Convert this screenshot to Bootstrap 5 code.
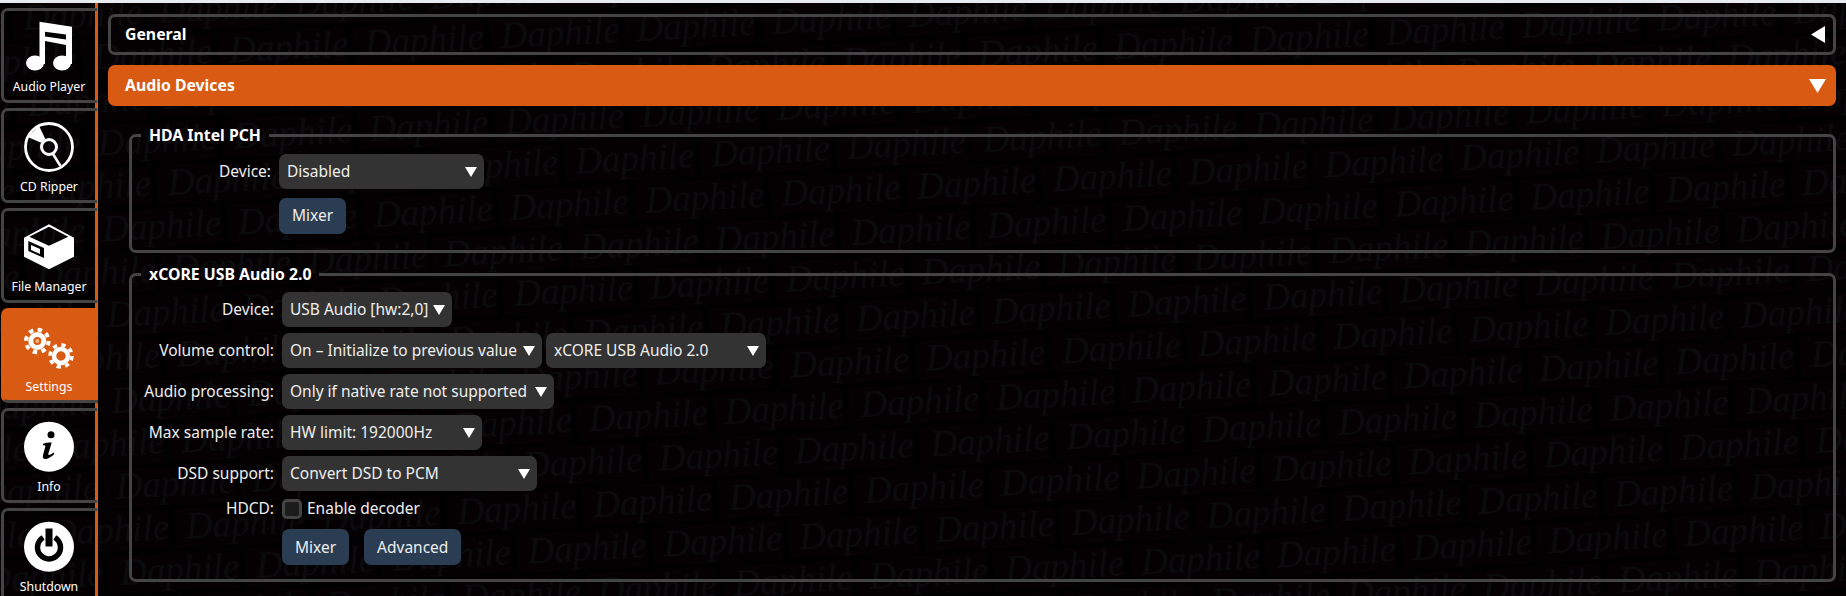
<!DOCTYPE html>
<html lang="en">
<head>
<meta charset="UTF-8">
<title>Daphile</title>
<link href="https://cdn.jsdelivr.net/npm/bootstrap@5.3.0/dist/css/bootstrap.min.css" rel="stylesheet">
<style>
  html, body { height: 100%; }
  body {
    background: #000; color: #eee; overflow: hidden;
    font-family: "Noto Sans", "Liberation Sans", sans-serif; font-size: 15.5px;
    border-top: 3px solid #e8ebef; position: relative;
  }
  .wm { position: absolute; inset: 0; width: 100%; height: 100%; z-index: 0; }
  .shell { position: relative; z-index: 1; height: 593px; }

  /* left menu */
  .side { width: 98px; flex: none; border-right: 3px solid #d85a13; padding: 5px 0 0 1px; }
  .side-item {
    width: 96px; height: 95px; margin-bottom: 5px; color: #fff; position: relative;
    border: 3px solid #444; border-right: 0; border-radius: 7px 0 0 7px;
    font-size: 12.3px; line-height: 14px; padding: 9px 3px 0 0;
  }
  .side-item svg { width: 52px; height: 52px; display: block; margin: 0 auto 8px; }
  .side-item.on { background: #d85a13; border-color: #d85a13; border-bottom-color: #444; width: 97px; padding-right: 4px; }

  /* main */
  .main { padding: 11px 10px 0 10px; width: 1748px; }
  .bar {
    height: 41px; border: 3px solid #444; border-radius: 7px; margin-bottom: 10px;
    padding: 0 8px 0 14px; font-weight: 700; font-size: 15.8px; color: #fff;
  }
  .bar.on { background: #d85a13; border-color: #d85a13; margin-bottom: 18px; padding-right: 7px; }
  .tri-l { width: 14px; height: 17px; }
  .tri-d { width: 17px; height: 14px; }
  .fset { border: 3px solid #444; border-radius: 7px; margin: 0 0 10px 21px; padding: 0; min-width: 0; }
  .fset-a { height: 129px; }
  .fset-b { height: 319px; }
  .fset-title {
    float: none; width: auto; margin: 0 0 0 9px; padding: 0 8px;
    font-weight: 700; font-size: 15.8px; line-height: 22px; color: #fff;
  }
  .rows-a { padding-top: 8px; }
  .rows-b { padding-top: 7px; }
  .frow { display: flex; align-items: center; margin-bottom: 6px; }
  .frow-btn { margin-top: 9px; }
  .btn-gap { gap: 15px; }
  .flabel { text-align: right; padding-right: 8px; color: #eee; flex: none; margin: 0; }
  .rows-a .flabel { width: 147px; }
  .rows-b .flabel { width: 150px; }
  .pick {
    height: 35px; border: 0; border-radius: 7px; color: #eee; font-size: 15.5px;
    background-color: #333; padding: 0 20px 0 8px; box-shadow: none;
    background-image: url("data:image/svg+xml,%3Csvg xmlns='http://www.w3.org/2000/svg' width='12' height='10'%3E%3Cpath d='M0 0h12L6 10z' fill='%23fff'/%3E%3C/svg%3E");
    background-repeat: no-repeat; background-size: 12px 10px; background-position: right 7px center;
    flex: none;
  }
  .w205 { width: 205px; }
  .w170 { width: 170px; }
  .w260 { width: 260px; margin-right: 4px; }
  .w220 { width: 220px; }
  .w272 { width: 272px; }
  .w200 { width: 200px; }
  .w255 { width: 255px; }
  .mix {
    height: 36px; background: #2b3d52; color: #eee; border: 0; border-radius: 7px;
    font-size: 15.5px; padding: 0 13px;
  }
  .mix:hover { background: #2b3d52; color: #eee; }
  .tick {
    width: 20px; height: 20px; margin: 0 5px 0 0; background-color: #1c1c1c;
    border: 3px solid #444; border-radius: 5px; appearance: none; flex: none;
  }
</style>
</head>
<body>

<!-- watermark tiles -->
<svg class="wm" aria-hidden="true">
  <defs>
    <pattern id="tile" width="136" height="86" patternUnits="userSpaceOnUse" patternTransform="translate(10 -4) rotate(-3)">
      <rect x="1" y="2" width="130" height="39" fill="#050103"/>
      <rect x="69" y="45" width="130" height="39" fill="#050103"/>
      <rect x="-67" y="45" width="130" height="39" fill="#050103"/>
      <g font-family="Liberation Serif" font-style="italic" font-size="37" fill="#0b0b0d">
        <text x="12" y="32">Daphile</text>
        <text x="80" y="75">Daphile</text>
        <text x="-56" y="75">Daphile</text>
      </g>
    </pattern>
  </defs>
  <rect width="100%" height="100%" fill="url(#tile)"/>
</svg>

<div class="shell d-flex">
  <nav class="side">
    <div class="side-item text-center">
      <svg viewBox="0 0 52 52"><path fill="#fff" fill-rule="evenodd" d="M16.500 1.700 49 6.700V44h-6V25L22 21v23h-5.500zM22 11.700v4.800l21 3v-5z"/><ellipse cx="12" cy="43" rx="9" ry="7.500" fill="#fff"/><ellipse cx="39" cy="43" rx="9" ry="7.500" fill="#fff"/></svg>
      Audio Player
    </div>
    <div class="side-item text-center">
      <svg viewBox="0 0 52 52"><circle cx="26" cy="27" r="23.500" fill="none" stroke="#fff" stroke-width="2.800"/><circle cx="26" cy="27" r="7.500" fill="none" stroke="#fff" stroke-width="3"/><path fill="#fff" d="M4.700 17 16 5.700l6.200 13-4 4z"/><path fill="none" stroke="#fff" stroke-width="2.500" d="M30 34l7.500 12"/></svg>
      CD Ripper
    </div>
    <div class="side-item text-center">
      <svg viewBox="0 0 52 52"><path fill="#fff" fill-rule="evenodd" d="M26 4.300 51 17.700v19L26 49.300 1 36.700v-19zM26 6.700 6.300 16.700 26 25.700l19.300-9zM5.300 21v10L21 38V28z"/><path fill="#fff" d="M8 25l9 4v5l-9-4z"/></svg>
      File Manager
    </div>
    <div class="side-item on text-center">
      <svg viewBox="0 0 52 52"><g fill="none" stroke="#fff"><circle cx="14.300" cy="21" r="6.500" stroke-width="5"/><circle cx="14.300" cy="21" r="11.300" stroke-width="4" stroke-dasharray="4.440 4.440"/><circle cx="38" cy="36" r="7" stroke-width="4.500"/><circle cx="38" cy="36" r="11" stroke-width="3.500" stroke-dasharray="4.320 4.320"/></g><circle cx="14.300" cy="21" r="2" fill="#f0b080"/></svg>
      Settings
    </div>
    <div class="side-item text-center">
      <svg viewBox="0 0 52 52"><circle cx="26" cy="26.700" r="25" fill="#fff"/><circle cx="28" cy="14.700" r="3.500" fill="#000"/><path fill="#000" d="M19.800 24c2.200-1.500 5.200-1.500 8.900-1.500L25.300 34c-.3 1.500 1.200 1.500 5.200-1.500l1 1.500c-4.500 4-7.500 5.500-10 5-2-.5-2-2.500-1.200-5l2.200-8c-.5-1-1.500-.7-2.200-.5z"/></svg>
      Info
    </div>
    <div class="side-item text-center">
      <svg viewBox="0 0 52 52"><circle cx="26" cy="26.700" r="25" fill="#fff"/><path fill="none" stroke="#000" stroke-width="5.500" d="M31.800 17.500A11.500 11.500 0 1 1 20.200 17.500"/><rect x="22.500" y="8.500" width="7" height="18" fill="#000"/></svg>
      Shutdown
    </div>
  </nav>

  <main class="main flex-grow-1">
    <div class="bar d-flex align-items-center justify-content-between">
      <span>General</span>
      <svg class="tri-l" viewBox="0 0 14 17"><path fill="#fff" d="M14 0v17L0 8.500z"/></svg>
    </div>
    <div class="bar on d-flex align-items-center justify-content-between">
      <span>Audio Devices</span>
      <svg class="tri-d" viewBox="0 0 17 14"><path fill="#fff" d="M0 0h17L8.500 14z"/></svg>
    </div>

    <fieldset class="fset fset-a">
      <legend class="fset-title">HDA Intel PCH</legend>
      <div class="rows-a">
        <div class="frow">
          <label class="flabel" for="d1">Device:</label>
          <select id="d1" class="form-select pick w205"><option>Disabled</option></select>
        </div>
        <div class="frow frow-btn">
          <span class="flabel"></span>
          <button class="btn mix">Mixer</button>
        </div>
      </div>
    </fieldset>

    <fieldset class="fset fset-b">
      <legend class="fset-title">xCORE USB Audio 2.0</legend>
      <div class="rows-b">
        <div class="frow">
          <label class="flabel" for="d2">Device:</label>
          <select id="d2" class="form-select pick w170"><option>USB Audio [hw:2,0]</option></select>
        </div>
        <div class="frow">
          <label class="flabel" for="d3">Volume control:</label>
          <select id="d3" class="form-select pick w260"><option>On – Initialize to previous value</option></select>
          <select class="form-select pick w220" aria-label="Mixer control"><option>xCORE USB Audio 2.0</option></select>
        </div>
        <div class="frow">
          <label class="flabel" for="d4">Audio processing:</label>
          <select id="d4" class="form-select pick w272"><option>Only if native rate not supported</option></select>
        </div>
        <div class="frow">
          <label class="flabel" for="d5">Max sample rate:</label>
          <select id="d5" class="form-select pick w200"><option>HW limit: 192000Hz</option></select>
        </div>
        <div class="frow">
          <label class="flabel" for="d6">DSD support:</label>
          <select id="d6" class="form-select pick w255"><option>Convert DSD to PCM</option></select>
        </div>
        <div class="frow">
          <span class="flabel">HDCD:</span>
          <input id="d7" type="checkbox" class="tick">
          <label for="d7">Enable decoder</label>
        </div>
        <div class="frow frow-btn">
          <span class="flabel"></span>
          <div class="d-flex btn-gap">
            <button class="btn mix">Mixer</button>
            <button class="btn mix">Advanced</button>
          </div>
        </div>
      </div>
    </fieldset>
  </main>
</div>

<script src="https://cdn.jsdelivr.net/npm/bootstrap@5.3.0/dist/js/bootstrap.bundle.min.js"></script>
</body>
</html>
